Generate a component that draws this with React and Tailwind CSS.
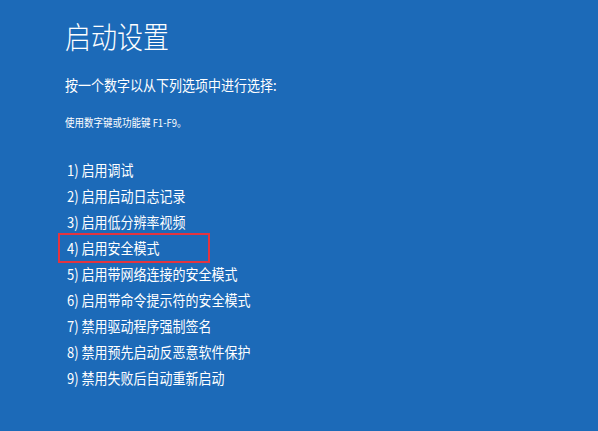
import React from "react";

const items = [
  "1) 启用调试",
  "2) 启用启动日志记录",
  "3) 启用低分辨率视频",
  "4) 启用安全模式",
  "5) 启用带网络连接的安全模式",
  "6) 启用带命令提示符的安全模式",
  "7) 禁用驱动程序强制签名",
  "8) 禁用预先启动反恶意软件保护",
  "9) 禁用失败后自动重新启动",
];

const font = { fontFamily: '"Noto Sans CJK SC", "Noto Sans", sans-serif' };

export default function App() {
  return (
    <div
      className="w-[598px] h-[431px] bg-[#1c6ab8] text-white overflow-hidden pl-[65px] pt-[18px] flex flex-col"
      style={font}
    >
      <div className="h-[34px] flex items-center">
        <span className="inline-block text-[26px] leading-[34px] font-light scale-y-[1.15]">启动设置</span>
      </div>
      <div className="mt-[23px] h-[20px] flex items-center">
        <span className="inline-block text-[13px] leading-[20px] scale-y-[1.15]">按一个数字以从下列选项中进行选择:</span>
      </div>
      <div className="mt-[20px] h-[14px] flex items-center">
        <span className="inline-block text-[9.5px] leading-[14px] scale-y-[1.15]">使用数字键或功能键 F1-F9。</span>
      </div>
      <div className="mt-[28px] flex flex-col pl-[2px]">
        {items.map((t, i) =>
          i === 3 ? (
            <div
              key={i}
              className="h-[30px] -mt-[2.5px] -mb-[1.5px] w-[152px] -ml-[9px] pl-[7px] border-2 border-[#e3343f] flex items-center"
            >
              <span className="inline-block text-[13px] leading-[26px] scale-y-[1.15]">{t}</span>
            </div>
          ) : (
            <div key={i} className="h-[26px] flex items-center">
              <span className="inline-block text-[13px] leading-[26px] scale-y-[1.15]">{t}</span>
            </div>
          )
        )}
      </div>
    </div>
  );
}
